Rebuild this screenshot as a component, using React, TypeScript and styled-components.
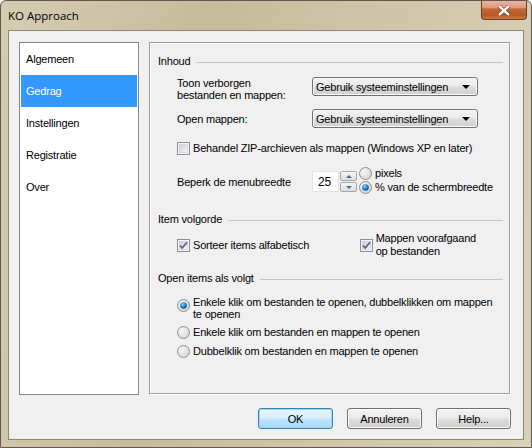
import React from 'react';
import styled, { createGlobalStyle } from 'styled-components';

const GlobalStyle = createGlobalStyle`
  html, body {
    margin: 0;
    padding: 0;
    background: #ffffff;
  }
  body {
    font-family: "Liberation Sans", Arial, sans-serif;
    font-size: 11px;
    letter-spacing: -0.2px;
    color: #000;
  }
`;

const Window = styled.div`
  width: 532px;
  height: 448px;
  box-sizing: border-box;
  border: 1px solid #5f5a4c;
  border-radius: 6px 6px 0 0;
  background: linear-gradient(100deg, #d6ccb2 0%, #c7bb9c 35%, #cfc4a7 60%, #d9d0b7 100%);
  display: flex;
  flex-direction: column;
  padding: 0 7px 7px 7px;
`;

const TitleBar = styled.div`
  height: 29px;
  display: flex;
  align-items: flex-start;
  justify-content: space-between;
`;

const Title = styled.span`
  font-family: "Open Sans", "Liberation Sans", sans-serif;
  font-size: 11.5px;
  letter-spacing: 0;
  line-height: 14px;
  margin-top: 8px;
  color: #000;
`;

const CloseButton = styled.div`
  width: 46px;
  height: 19px;
  margin-right: -3px;
  box-sizing: border-box;
  border: 1px solid #6e3a26;
  border-radius: 0 0 4px 4px;
  border-top: none;
  background: linear-gradient(180deg, #eab2a0 0%, #e39c84 35%, #c6662f 45%, #b65a26 80%, #d27a4a 100%);
  display: flex;
  align-items: center;
  justify-content: center;
`;

const Client = styled.div`
  flex: 1;
  box-sizing: border-box;
  border: 1px solid #8c8773;
  background: #f0f0f0;
  display: flex;
  flex-direction: column;
  padding: 11px 12px 0 10px;
`;

const Body = styled.div`
  display: flex;
  gap: 10px;
  height: 353px;
`;

const Sidebar = styled.div`
  width: 120px;
  box-sizing: border-box;
  border: 1px solid #828790;
  background: #ffffff;
  padding: 0 1px;
`;

const NavItem = styled.div<{ $active?: boolean }>`
  height: 32px;
  line-height: 32px;
  padding-left: 5px;
  background: ${p => (p.$active ? '#3399ff' : 'transparent')};
  color: ${p => (p.$active ? '#ffffff' : '#000000')};
`;

const Panel = styled.div`
  flex: 1;
  box-sizing: border-box;
  border-top: 1px solid #a0a0a0;
  border-left: 1px solid #a0a0a0;
  border-right: 1px solid #ffffff;
  border-bottom: 1px solid #ffffff;
  box-shadow: inset -1px -1px 0 #a0a0a0, inset 1px 1px 0 #ffffff;
  padding: 12px 7px 0 8px;
  display: flex;
  flex-direction: column;
  white-space: nowrap;
`;

const GroupHeader = styled.div<{ $top: number }>`
  display: flex;
  align-items: center;
  gap: 6px;
  height: 13px;
  line-height: 13px;
  margin-top: ${p => p.$top}px;
  color: #000;

  &::after {
    content: '';
    flex: 1;
    height: 0;
    border-top: 1px solid #c4c4c4;
    margin-top: 1px;
  }
`;

const Row = styled.div<{ $top: number; $align?: string }>`
  display: flex;
  align-items: ${p => p.$align || 'center'};
  margin-top: ${p => p.$top}px;
  padding-left: 19px;
`;

const FieldLabel = styled.div`
  width: 135px;
  flex: none;
  line-height: 12px;
`;

const Combo = styled.div`
  width: 166px;
  height: 19px;
  box-sizing: border-box;
  border: 1px solid #707070;
  border-radius: 3px;
  background: linear-gradient(180deg, #f2f2f2 0%, #ebebeb 48%, #dddddd 52%, #cfcfcf 100%);
  display: flex;
  align-items: center;
  justify-content: space-between;
  padding: 0 7px 0 3px;
  box-shadow: inset 0 0 0 1px #fcfcfc;
`;

const Arrow = styled.span`
  width: 0;
  height: 0;
  border-left: 4px solid transparent;
  border-right: 4px solid transparent;
  border-top: 4px solid #000;
`;

const CheckLabel = styled.label`
  display: flex;
  align-items: center;
  gap: 3px;
  line-height: 13px;
`;

const Spinner = styled.div`
  display: flex;
  height: 21px;
`;

const SpinInput = styled.div`
  width: 27px;
  box-sizing: border-box;
  background: #ffffff;
  border: 1px solid #e3e3e3;
  display: flex;
  align-items: center;
  padding-left: 5px;
  font-size: 12px;
`;

const SpinButtons = styled.div`
  display: flex;
  flex-direction: column;
  width: 17px;
  gap: 1px;
  padding: 0 1px;
`;

const SpinButton = styled.div<{ $down?: boolean }>`
  flex: 1;
  box-sizing: border-box;
  border: 1px solid #a7a7a7;
  border-radius: 2px;
  background: linear-gradient(180deg, #f6f6f6, #dedede);
  display: flex;
  align-items: center;
  justify-content: center;

  &::before {
    content: '';
    border-left: 3px solid transparent;
    border-right: 3px solid transparent;
    ${p => (p.$down ? 'border-top: 3px solid #4b6a8a;' : 'border-bottom: 3px solid #4b6a8a;')}
  }
`;

const RadioStack = styled.div`
  display: flex;
  flex-direction: column;
  gap: 1px;
  margin-left: 1px;
  margin-top: -2px;
`;

const RadioOption = styled.label`
  display: flex;
  align-items: flex-start;
  gap: 3px;
  line-height: 12px;
`;

const RadioMark = styled.span`
  padding-top: 3px;
  display: flex;
`;

const ColumnRight = styled.div`
  margin-left: auto;
  margin-right: 27px;
`;

const Footer = styled.div`
  display: flex;
  justify-content: flex-end;
  gap: 14px;
  margin-top: 13px;
`;

const Button = styled.div<{ $default?: boolean }>`
  width: 75px;
  height: 21px;
  box-sizing: border-box;
  border: 1px solid ${p => (p.$default ? '#3c7fb1' : '#707070')};
  border-radius: 3px;
  background: ${p =>
    p.$default
      ? 'linear-gradient(180deg, #eaf6fd 0%, #d9f0fc 48%, #bee6fd 52%, #a7d9f5 100%)'
      : 'linear-gradient(180deg, #f2f2f2 0%, #ebebeb 48%, #dddddd 52%, #cfcfcf 100%)'};
  box-shadow: inset 0 0 0 1px ${p => (p.$default ? '#9ed8f4' : '#fcfcfc')};
  display: flex;
  align-items: center;
  justify-content: center;
`;

const CheckBox = ({ checked }: { checked?: boolean }) => (
  <svg width="13" height="13" viewBox="0 0 13 13" style={{ flex: 'none' }}>
    <defs>
      <linearGradient id="cbg" x1="0" y1="0" x2="1" y2="1">
        <stop offset="0" stopColor="#cbcfd5" />
        <stop offset="1" stopColor="#f6f6f6" />
      </linearGradient>
    </defs>
    <rect x="0.5" y="0.5" width="12" height="12" fill="#f4f4f4" stroke="#8e8f8f" />
    <rect x="2.5" y="2.5" width="8" height="8" fill="url(#cbg)" stroke="#c6c9cd" strokeWidth="0.6" />
    {checked && (
      <path d="M3 6.5 L5.2 9 L10 3.3" fill="none" stroke="#4a5f97" strokeWidth="1.7" />
    )}
  </svg>
);

const Radio = ({ checked }: { checked?: boolean }) => (
  <svg width="13" height="13" viewBox="0 0 13 13" style={{ flex: 'none' }}>
    <defs>
      <radialGradient id="rbg" cx="0.35" cy="0.35" r="0.8">
        <stop offset="0" stopColor="#f5f5f5" />
        <stop offset="1" stopColor="#cfd2d6" />
      </radialGradient>
      <radialGradient id="rdot" cx="0.4" cy="0.35" r="0.7">
        <stop offset="0" stopColor="#8fd3ff" />
        <stop offset="0.6" stopColor="#1c7cc8" />
        <stop offset="1" stopColor="#0b3e78" />
      </radialGradient>
    </defs>
    <circle cx="6.5" cy="6.5" r="6" fill="url(#rbg)" stroke="#8e8f8f" />
    {checked && <circle cx="6.5" cy="6.5" r="3.3" fill="url(#rdot)" />}
  </svg>
);

export default function App() {
  return (
    <>
      <GlobalStyle />
      <Window>
        <TitleBar>
          <Title>KO Approach</Title>
          <CloseButton>
            <svg width="14" height="11" viewBox="0 0 14 11">
              <path d="M2 1 L12 10 M12 1 L2 10" stroke="#5a2a14" strokeWidth="3.6" />
              <path d="M2 1 L12 10 M12 1 L2 10" stroke="#ffffff" strokeWidth="2.4" />
            </svg>
          </CloseButton>
        </TitleBar>
        <Client>
          <Body>
            <Sidebar>
              <NavItem>Algemeen</NavItem>
              <NavItem $active>Gedrag</NavItem>
              <NavItem>Instellingen</NavItem>
              <NavItem>Registratie</NavItem>
              <NavItem>Over</NavItem>
            </Sidebar>
            <Panel>
              <GroupHeader $top={0}>Inhoud</GroupHeader>
              <Row $top={9} $align="flex-start">
                <FieldLabel>
                  Toon verborgen
                  <br />
                  bestanden en mappen:
                </FieldLabel>
                <Combo>
                  <span>Gebruik systeeminstellingen</span>
                  <Arrow />
                </Combo>
              </Row>
              <Row $top={8}>
                <FieldLabel>Open mappen:</FieldLabel>
                <Combo>
                  <span>Gebruik systeeminstellingen</span>
                  <Arrow />
                </Combo>
              </Row>
              <Row $top={14}>
                <CheckLabel>
                  <CheckBox />
                  Behandel ZIP-archieven als mappen (Windows XP en later)
                </CheckLabel>
              </Row>
              <Row $top={14}>
                <FieldLabel>Beperk de menubreedte</FieldLabel>
                <Spinner>
                  <SpinInput>25</SpinInput>
                  <SpinButtons>
                    <SpinButton />
                    <SpinButton $down />
                  </SpinButtons>
                </Spinner>
                <RadioStack>
                  <RadioOption>
                    <Radio />
                    <span>pixels</span>
                  </RadioOption>
                  <RadioOption>
                    <Radio checked />
                    <span>% van de schermbreedte</span>
                  </RadioOption>
                </RadioStack>
              </Row>
              <GroupHeader $top={19}>Item volgorde</GroupHeader>
              <Row $top={6}>
                <CheckLabel>
                  <CheckBox checked />
                  Sorteer items alfabetisch
                </CheckLabel>
                <ColumnRight>
                  <CheckLabel>
                    <CheckBox checked />
                    <span>
                      Mappen voorafgaand
                      <br />
                      op bestanden
                    </span>
                  </CheckLabel>
                </ColumnRight>
              </Row>
              <GroupHeader $top={14}>Open items als volgt</GroupHeader>
              <Row $top={11} $align="flex-start">
                <RadioOption>
                  <RadioMark>
                    <Radio checked />
                  </RadioMark>
                  <span>
                    Enkele klik om bestanden te openen, dubbelklikken om mappen
                    <br />
                    te openen
                  </span>
                </RadioOption>
              </Row>
              <Row $top={6}>
                <RadioOption>
                  <Radio />
                  <span>Enkele klik om bestanden en mappen te openen</span>
                </RadioOption>
              </Row>
              <Row $top={6}>
                <RadioOption>
                  <Radio />
                  <span>Dubbelklik om bestanden en mappen te openen</span>
                </RadioOption>
              </Row>
            </Panel>
          </Body>
          <Footer>
            <Button $default>OK</Button>
            <Button>Annuleren</Button>
            <Button>Help...</Button>
          </Footer>
        </Client>
      </Window>
    </>
  );
}
